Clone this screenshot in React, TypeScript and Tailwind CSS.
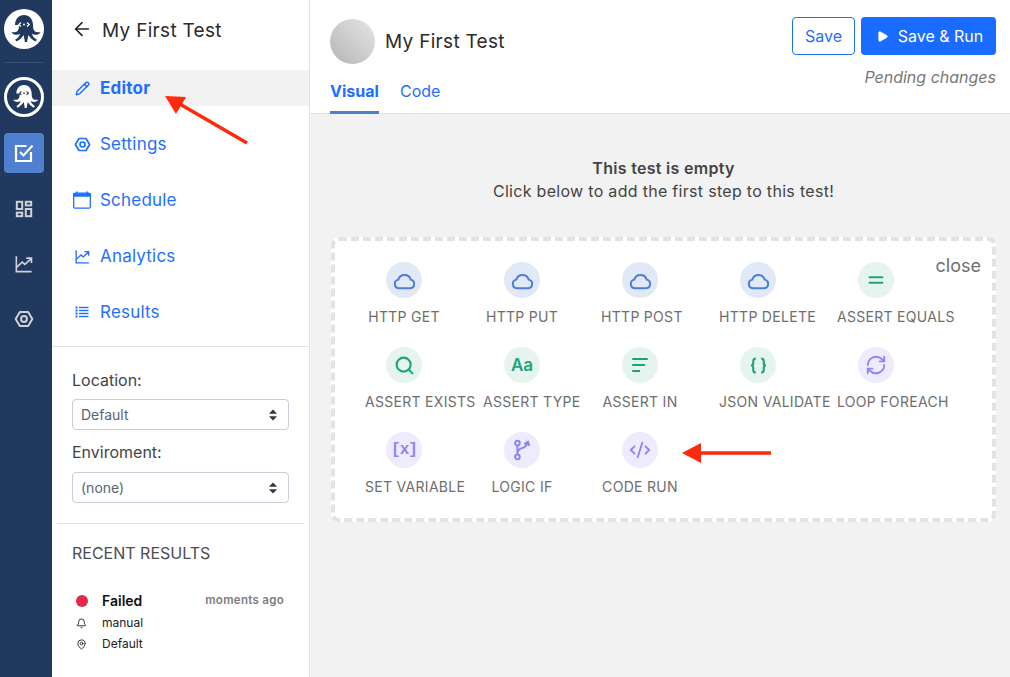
import React from 'react';
import { ArrowLeft, Pencil, Search, Equal, RefreshCw, CodeXml, Bell, MapPin, Play } from 'lucide-react';

function Octopus({ fg, bg }: { fg: string; bg: string }) {
  return (
    <svg viewBox="0 0 40 40" className="w-full h-full">
      <path d="M11 16c0-6 4-10 9-10s9 4 9 10c0 3 .5 5.500 2 6.500 1.200.8 3 .8 5.500.7-.5 1.500-2.500 2.600-5 2.600-1.500 0-2.700-.4-3.600-1 .6 2.500 2.400 4.500 5 6l-1.500 1.700c-3.500-1.700-5.500-4-7-6.500-.6 2.500-1 5-1.300 7h-2.200c-.3-2-.7-4.500-1.300-7-1.500 2.500-3.500 4.800-7 6.500l-1.500-1.700c2.600-1.500 4.400-3.500 5-6-.9.600-2.100 1-3.600 1-2.500 0-4.500-1.100-5-2.600 2.500.1 4.300.1 5.500-.7 1.500-1 2-3.500 2-6.500z" fill={fg} />
      <path d="M17 13.500l-2.200 2 2.200 2M23 13.500l2.200 2-2.200 2" fill="none" stroke={bg} strokeWidth="1.300" />
      <circle cx="20" cy="15.500" r="1" fill={bg} />
    </svg>
  );
}

function Hexagon({ className }: { className: string }) {
  return (
    <svg viewBox="0 0 24 24" className={className} fill="none" stroke="currentColor" strokeWidth="2.400" strokeLinejoin="round">
      <path d="M7 3.500h10l5 8.500-5 8.500H7L2 12z" />
      <circle cx="12" cy="12" r="3.500" />
    </svg>
  );
}

function Dashboard({ className }: { className: string }) {
  return (
    <svg viewBox="0 0 20 20" className={className} fill="none" stroke="currentColor" strokeWidth="2.200">
      <rect x="2" y="2" width="6" height="8" />
      <rect x="12" y="2" width="6" height="4" />
      <rect x="12" y="10" width="6" height="8" />
      <rect x="2" y="14" width="6" height="4" />
    </svg>
  );
}

function Chart({ className }: { className: string }) {
  return (
    <svg viewBox="0 0 20 20" className={className} fill="none" stroke="currentColor" strokeWidth="1.800">
      <path d="M1.500 1.500v17h17" />
      <path d="M2 13.500l6-5.500 3 2.500 7-6.500M12.500 3.500h5.800v5.500" />
    </svg>
  );
}

function Calendar({ className }: { className: string }) {
  return (
    <svg viewBox="0 0 18 18" className={className} fill="none" stroke="currentColor" strokeWidth="1.300">
      <rect x="0.700" y="2.200" width="16.600" height="15" rx="1.500" />
      <path d="M0.700 3h16.600v2H.7z" fill="currentColor" />
      <path d="M4 .5v2M14 .5v2" strokeWidth="1.500" />
    </svg>
  );
}

function ListIcon({ className }: { className: string }) {
  return (
    <svg viewBox="0 0 14 14" className={className} fill="currentColor">
      <rect x="0.500" y="1.500" width="2" height="2" />
      <rect x="0.500" y="4.500" width="2" height="2" />
      <rect x="0.500" y="7.500" width="2" height="2" />
      <rect x="0.500" y="10.500" width="2" height="2" />
      <rect x="4" y="1.800" width="9.500" height="1.400" />
      <rect x="4" y="4.800" width="9.500" height="1.400" />
      <rect x="4" y="7.800" width="9.500" height="1.400" />
      <rect x="4" y="10.800" width="9.500" height="1.400" />
    </svg>
  );
}

function CheckBox({ className }: { className: string }) {
  return (
    <svg viewBox="0 0 20 20" className={className} fill="none" stroke="currentColor" strokeWidth="2.200">
      <path d="M12.500 3H2v15h15V9" />
      <path d="M6 9l3.500 3.500L18.500 2.500" />
    </svg>
  );
}

function CloudIcon() {
  return (
    <svg viewBox="0 0 24 24" className="h-[23px] w-[23px]" fill="none" stroke="currentColor" strokeWidth="2.100" strokeLinejoin="round">
      <path d="M6.500 20H17.500a4.500 4.500 0 0 0 1-8.900A6.800 6.800 0 0 0 5.500 11.100a4.500 4.500 0 0 0 1 8.900z" />
    </svg>
  );
}

function LinesIcon() {
  return (
    <svg viewBox="0 0 24 24" className="h-[22px] w-[22px]" fill="none" stroke="currentColor" strokeWidth="2.200">
      <path d="M3.500 5.500h17M3.500 12h14M3.500 18.500h8.500" />
    </svg>
  );
}

function CurlyIcon() {
  return (
    <svg viewBox="0 0 24 24" className="h-[21px] w-[21px]" fill="none" stroke="currentColor" strokeWidth="2.400">
      <path d="M9 4c-2 0-3 1-3 3v2.500c0 1.500-1 2.500-2.500 2.500 1.500 0 2.500 1 2.500 2.500V17c0 2 1 3 3 3" />
      <path d="M15 4c2 0 3 1 3 3v2.500c0 1.500 1 2.500 2.500 2.500-1.500 0-2.500 1-2.500 2.500V17c0 2-1 3-3 3" />
    </svg>
  );
}

function BranchIcon() {
  return (
    <svg viewBox="0 0 24 24" className="h-[22px] w-[22px]" fill="none" stroke="currentColor" strokeWidth="2.200">
      <circle cx="7" cy="4.500" r="2.500" />
      <circle cx="7" cy="19.500" r="2.500" />
      <path d="M7 7v10M7 16c0-4 2-5 5-6 3-1 5-2 6-6M14.500 5.500l4-2.500 1.500 4.500" />
    </svg>
  );
}

function Caret() {
  return (
    <svg viewBox="0 0 8 12" className="absolute right-[12px] top-1/2 -translate-y-1/2 w-[8px] h-[12px]" fill="#2d3748">
      <path d="M4 .5l4 4.200H0zM4 11.500L0 7.300h8z" />
    </svg>
  );
}

function FakeSelect({ value }: { value: string }) {
  return (
    <div className="relative">
      <select className="block w-full h-[31px] appearance-none rounded-[4px] border border-[#c6cfda] bg-white pl-[8px] text-[14px] text-[#5a6472]">
        <option>{value}</option>
      </select>
      <Caret />
    </div>
  );
}

const navItems = [
  { label: 'Editor', icon: <Pencil className="w-[15px] h-[15px]" strokeWidth={2.300} /> },
  { label: 'Settings', icon: <Hexagon className="w-[17px] h-[17px]" /> },
  { label: 'Schedule', icon: <Calendar className="w-[18px] h-[18px]" /> },
  { label: 'Analytics', icon: <Chart className="w-[15px] h-[15px]" /> },
  { label: 'Results', icon: <ListIcon className="w-[14px] h-[14px]" /> },
];

const BLUE = 'bg-[#e1e9f7] text-[#4a7fdb]';
const GREEN = 'bg-[#e5f4ef] text-[#1fa37c]';
const PURPLE = 'bg-[#edebfd] text-[#8e86f0]';

const steps = [
  { label: 'HTTP GET', tone: BLUE, icon: <CloudIcon /> },
  { label: 'HTTP PUT', tone: BLUE, icon: <CloudIcon /> },
  { label: 'HTTP POST', tone: BLUE, icon: <CloudIcon /> },
  { label: 'HTTP DELETE', tone: BLUE, icon: <CloudIcon /> },
  { label: 'ASSERT EQUALS', tone: GREEN, icon: <Equal className="w-[22px] h-[22px]" strokeWidth={2.300} /> },
  { label: 'ASSERT EXISTS', tone: GREEN, icon: <Search className="w-[21px] h-[21px]" strokeWidth={2.400} /> },
  { label: 'ASSERT TYPE', tone: GREEN, icon: <span className="text-[17px] font-semibold leading-none">Aa</span> },
  { label: 'ASSERT IN', tone: GREEN, icon: <LinesIcon /> },
  { label: 'JSON VALIDATE', tone: GREEN, icon: <CurlyIcon /> },
  { label: 'LOOP FOREACH', tone: PURPLE, icon: <RefreshCw className="w-[22px] h-[22px]" strokeWidth={2} /> },
  { label: 'SET VARIABLE', tone: PURPLE, icon: <span className="font-['Liberation_Mono',monospace] text-[16px] font-bold leading-none tracking-[-1px]">[x]</span> },
  { label: 'LOGIC IF', tone: PURPLE, icon: <BranchIcon /> },
  { label: 'CODE RUN', tone: PURPLE, icon: <CodeXml className="w-[22px] h-[22px]" strokeWidth={2} /> },
];

export default function App() {
  return (
    <div className="relative flex h-[677px] w-[1010px] overflow-hidden bg-white font-['Inter',sans-serif]">
      {/* icon rail */}
      <div className="flex w-[52px] shrink-0 flex-col items-center bg-[#22395f] pr-[4px]">
        <div className="mt-[9px] h-[40px] w-[40px] rounded-full bg-white">
          <Octopus fg="#22395f" bg="#ffffff" />
        </div>
        <div className="mt-[13px] h-px w-[40px] bg-[#3a4f74]" />
        <div className="mt-[14px] h-[40px] w-[40px] rounded-full border-[3px] border-white bg-[#22395f]">
          <Octopus fg="#ffffff" bg="#22395f" />
        </div>
        <div className="mt-[16px] flex h-[40px] w-[40px] items-center justify-center rounded-[4px] bg-[#4f7fcf] text-white">
          <CheckBox className="h-[20px] w-[20px]" />
        </div>
        <Dashboard className="mt-[27px] h-[18px] w-[18px] text-[#cfd2d6]" />
        <Chart className="mt-[37px] h-[18px] w-[20px] text-[#cfd2d6]" />
        <Hexagon className="mt-[36px] h-[20px] w-[20px] text-[#cfd2d6]" />
      </div>

      {/* test menu */}
      <div className="flex w-[258px] shrink-0 flex-col border-r border-[#e2e2e2]">
        <div className="flex h-[70px] items-start pl-[20px] pt-[18px]">
          <ArrowLeft className="-ml-[1px] h-[22px] w-[22px] text-[#222]" strokeWidth={1.700} />
          <span className="ml-[9px] text-[19px] leading-[26px] tracking-[0.3px] text-[#2b2b2b]">My First Test</span>
        </div>
        <div className="flex flex-col gap-[20px]">
          {navItems.map((item) => (
            <div key={item.label} className={`flex h-[36px] items-center pl-[20px] text-[#1f6fff] ${item.label === 'Editor' ? 'bg-[#f2f2f2]' : ''}`}>
              <span className="flex w-[20px] justify-center">{item.icon}</span>
              <span className={`ml-[8px] mt-[2px] text-[17px] tracking-[0.2px] ${item.label === 'Editor' ? 'font-bold' : ''}`}>{item.label}</span>
            </div>
          ))}
        </div>
        <div className="mt-[16px] border-t border-[#e2e2e2] px-[20px] pt-[23px]">
          <div className="text-[16px] leading-[20px] text-[#444]">Location:</div>
          <div className="mt-[9px]"><FakeSelect value="Default" /></div>
          <div className="mt-[12px] text-[16px] leading-[20px] text-[#444]">Enviroment:</div>
          <div className="mt-[10px]"><FakeSelect value="(none)" /></div>
        </div>
        <div className="mx-[5px] mt-[20px] border-t border-[#e2e2e2] px-[15px] pt-[19px]">
          <div className="text-[16px] leading-[20px] text-[#4d4d4d]">RECENT RESULTS</div>
          <div className="mt-[27px] flex items-center justify-between pr-[5px]">
            <div className="flex items-center">
              <span className="ml-[4px] h-[12px] w-[12px] rounded-full bg-[#e3284b]" />
              <span className="ml-[14px] text-[14px] font-semibold text-[#111]">Failed</span>
            </div>
            <span className="text-[11.500px] font-semibold tracking-[0.3px] text-[#7d7d7d]">moments ago</span>
          </div>
          <div className="mt-[3px] flex h-[18px] items-center text-[12px] text-[#222]">
            <Bell className="ml-[4px] h-[11px] w-[11px]" strokeWidth={2} />
            <span className="ml-[15px]">manual</span>
          </div>
          <div className="mt-[3px] flex h-[18px] items-center text-[12px] text-[#222]">
            <MapPin className="ml-[4px] h-[11px] w-[11px]" strokeWidth={2} />
            <span className="ml-[15px]">Default</span>
          </div>
        </div>
      </div>

      {/* main */}
      <div className="flex min-w-0 flex-1 flex-col bg-[#f2f2f2]">
        <div className="flex h-[114px] justify-between border-b border-[#e2e2e2] bg-white pl-[20px] pr-[14px]">
          <div className="flex flex-col">
            <div className="mt-[19px] flex items-center">
              <div className="h-[45px] w-[45px] rounded-full bg-gradient-to-bl from-[#e6e6e6] to-[#b5b5b5]" />
              <span className="ml-[10px] mt-[2px] text-[19px] tracking-[0.3px] text-[#2b2b2b]">My First Test</span>
            </div>
            <div className="mt-[17px] flex gap-[21px] text-[16px] leading-[20px]">
              <div className="h-[33px] w-[49px] border-b-[3px] border-[#4f7fcf] font-bold text-[#1f6fff]">Visual</div>
              <div className="text-[#1f6fff]">Code</div>
            </div>
          </div>
          <div className="flex flex-col items-end pt-[17px]">
            <div className="flex gap-[6px]">
              <button className="h-[38px] w-[63px] rounded-[4px] border border-[#1f6fff] bg-white text-[16px] text-[#1f6fff]">Save</button>
              <button className="flex h-[38px] w-[135px] items-center justify-center gap-[9px] rounded-[4px] bg-[#1a6bff] pl-[2px] text-[16px] text-white">
                <Play className="h-[13px] w-[13px] fill-white" strokeWidth={1} />
                Save &amp; Run
              </button>
            </div>
            <div className="mt-[12px] text-[16px] italic leading-[20px] text-[#777]">Pending changes</div>
          </div>
        </div>

        <div className="ml-[21px] mr-[14px]">
          <div className="mt-[43px] text-center text-[16px] leading-[23px] tracking-[0.3px] text-[#444]">
            <div className="font-semibold">This test is empty</div>
            <div>Click below to add the first step to this test!</div>
          </div>

          <div className="relative mt-[34px] h-[285px] rounded-[8px] border-[4px] border-dashed border-[#e3e3e3] bg-white pl-[30px] pt-[21px]">
            <div className="absolute right-[11px] top-[11px] text-[18px] text-[#6f6f6f]">close</div>
            <div className="grid grid-cols-[repeat(5,78px)] gap-x-[40px] gap-y-[22px]">
              {steps.map((step) => (
                <div key={step.label} className="flex w-[78px] flex-col items-center">
                  <div className={`flex h-[36px] w-[36px] items-center justify-center rounded-full ${step.tone}`}>{step.icon}</div>
                  <div className="mt-[11px] h-[16px] w-[78px] whitespace-nowrap text-center text-[14px] leading-[16px] tracking-[0.3px] text-[#6e6e6e]">{step.label}</div>
                </div>
              ))}
            </div>
          </div>
        </div>
      </div>

      {/* annotation arrows */}
      <svg className="pointer-events-none absolute left-0 top-0 h-[677px] w-[1010px]" viewBox="0 0 1010 677">
        <path d="M247 143L178 103" stroke="#ff2a0d" strokeWidth="3.500" />
        <path d="M165 96L186 97L176 114z" fill="#ff2a0d" />
        <path d="M771 453H695" stroke="#ff2a0d" strokeWidth="3.500" />
        <path d="M682 453L701 443V463z" fill="#ff2a0d" />
      </svg>
    </div>
  );
}
